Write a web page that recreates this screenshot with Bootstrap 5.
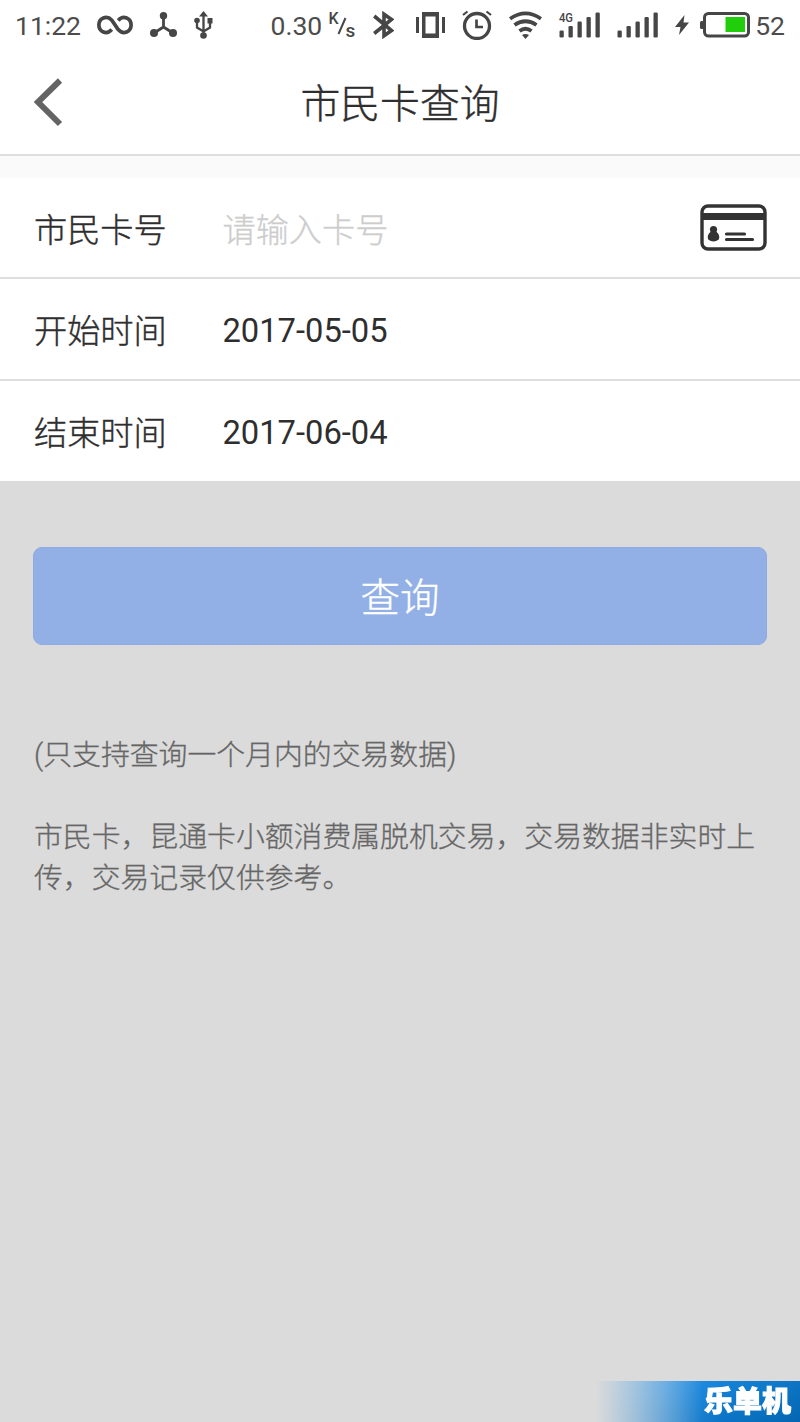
<!DOCTYPE html>
<html lang="zh-CN">
<head>
<meta charset="utf-8">
<meta name="viewport" content="width=device-width, initial-scale=1">
<title>市民卡查询</title>
<link href="https://cdn.jsdelivr.net/npm/bootstrap@5.3.0/dist/css/bootstrap.min.css" rel="stylesheet">
<style>
  body { font-family: Roboto, "Noto Sans CJK SC", sans-serif; background: #dbdbdb; color: #2e2e2e; font-weight: 300; }
  .screen { min-height: 1422px; }
  .status-bar { height: 50px; padding: 0 15px; font-size: 26.5px; line-height: 1; color: #4c4c4c; font-weight: 400; }
  .status-bar span { padding-top: 2px; }
  .status-bar svg { display: block; flex: none; }
  .gap-a { margin-left: 16px; } .gap-b { margin-left: 17px; } .gap-c { margin-left: 22px; }
  .rate { width: 28px; height: 30px; margin-left: 6px; overflow: visible; }
  .battery { margin: 0 5px 0 11px; }
  .title-bar { height: 106px; border-bottom: 2px solid #dedede; padding: 0 33px; }
  .title-bar h1 { font-size: 39.8px; font-weight: 300; line-height: 1; padding-top: 6px; margin-right: 30px; -webkit-text-stroke: .4px currentColor; }
  .back-icon { display: block; }
  .band { height: 22px; background: #fafafa; }
  .field { padding: 0 33px; font-size: 33.2px; line-height: 1; border-bottom: 2px solid #dedede; height: 101.4px; }
  .field:last-child { border-bottom: 0; height: 100.2px; }
  .field-label { width: 189.5px; padding: 5px 0 0 1px; -webkit-text-stroke: .4px currentColor; }
  .field-value { font-size: 32.7px; padding-top: 5px; font-weight: 400; }
  .field input { font-size: 33.2px; height: 60px; font-weight: 300; position: relative; top: 3px; -webkit-text-stroke: .3px #cdcdcd; }
  .field input::placeholder { color: #cdcdcd; opacity: 1; }
  .actions { padding: 66px 33px 0; }
  .btn-query, .btn-query:hover { height: 98px; border: 1px solid #8eaae0; border-radius: 9px; background: #92afe6; color: #fff; font-size: 39.5px; font-weight: 300; line-height: 1; padding-top: 12px; -webkit-text-stroke: .35px currentColor; }
  .notes { padding: 90px 33px 0 34px; font-size: 28.85px; line-height: 41px; color: #666; -webkit-text-stroke: .3px currentColor; }
  .notes p { margin-bottom: 41px; }
  .stamp { width: 204px; height: 41px; padding: 2px 9px 0 0; color: #fff; font-size: 29px; font-weight: 900; line-height: 1;
    background: linear-gradient(180deg, #2299f044, #0060a844), linear-gradient(90deg, #68aee8, #3897e3 35%, #107bd0 62%, #0568b4);
    -webkit-mask-image: linear-gradient(90deg, transparent, #000 52%); mask-image: linear-gradient(90deg, transparent, #000 52%); }
  .stamp span { -webkit-text-stroke: 1px #fff; }
</style>
</head>
<body>
<div class="screen d-flex flex-column">
  <div class="bg-white">
    <div class="status-bar d-flex align-items-center justify-content-between">
      <div class="d-flex align-items-center">
        <span>11:22</span>
        <svg class="gap-a" width="36" height="20" viewBox="0 0 36 20" fill="none" stroke="#464646" stroke-width="3.7"><path d="M14.800 14.500C9.500 20.500 1.900 16.500 1.900 10S9.500-.5 14.800 5.200L21.200 14.500C26.500 20.500 34.100 16.500 34.100 10S26.500-.5 21.200 5.500"/></svg>
        <svg class="gap-b" width="27" height="26" viewBox="0 0 27 26" fill="#464646"><path d="M13.500 4V16M13.500 15L4 21M13.500 15l9.500 6" stroke="#464646" stroke-width="2.800"/><circle cx="13.500" cy="3.800" r="3.700"/><circle cx="4" cy="21" r="4"/><circle cx="23" cy="21" r="4"/></svg>
        <svg class="gap-b" width="19" height="28" viewBox="0 0 19 28" fill="#464646"><path d="M9.500 4v20M3 10v6.500l6.500 4 6.500-4V10" fill="none" stroke="#464646" stroke-width="2.300"/><path d="M9.500 0l4.500 5.500H5zM13.500 7h5v5.500h-5z"/><circle cx="3" cy="9.500" r="2.800"/><circle cx="9.500" cy="24.500" r="3.300"/></svg>
      </div>
      <div class="d-flex align-items-center">
        <span>0.30</span>
        <svg class="rate" viewBox="0 0 28 30" fill="#464646" font-family="Roboto, sans-serif" font-weight="500"><text x="0.500" y="14" font-size="16">K</text><text x="17.500" y="27" font-size="19">s</text><path d="M10.500 24L17.500 8" stroke="#464646" stroke-width="2"/></svg>
        <svg class="gap-b" width="21" height="28" viewBox="0 0 21 28" fill="none" stroke="#464646" stroke-width="3.600"><path d="M1.200 5L18.500 19.500l-7.500 5.300V3.200L18.500 8.500 1.200 22.500"/></svg>
        <svg class="gap-c" width="29" height="28" viewBox="0 0 29 28" fill="#464646"><path d="M0 6h3v16H0zM26 6h3v16h-3zM6 1h17v26H6zM9.500 5.500v17h10v-17z" fill-rule="evenodd"/></svg>
        <svg class="gap-b" width="30" height="30" viewBox="0 0 30 30" fill="none" stroke="#464646" stroke-width="3.300"><circle cx="15" cy="16" r="12.500"/><path d="M14.500 9.500V17H21" stroke-width="2.700"/><path d="M1 5L5.500 1.500M29 5l-4.500-3.500" stroke-width="2.200"/></svg>
        <svg class="gap-b" width="33" height="28" viewBox="0 0 33 28" fill="none" stroke="#464646" stroke-width="3.800"><path d="M1 7.800Q16.500-3 32 7.800M5.500 14Q16.500 6.500 27.500 14M10.500 20Q16.500 15.500 22.500 20"/><path d="M13 24Q16.500 22 20 24L16.500 28z" fill="#464646" stroke="none"/></svg>
        <svg class="gap-b" width="41" height="28" viewBox="0 0 41 28" fill="#464646"><text x="0" y="10.800" font-family="Roboto, sans-serif" font-size="12.500" font-weight="500" textLength="14" lengthAdjust="spacingAndGlyphs">4G</text><rect x="0.500" y="19.500" width="4.300" height="7" rx="1.300"/><rect x="9.500" y="15" width="4.300" height="11.500" rx="1.300"/><rect x="18.500" y="10.500" width="4.300" height="16" rx="1.300"/><rect x="27.500" y="6" width="4.300" height="20.500" rx="1.300"/><rect x="36.500" y="1.500" width="4.300" height="25" rx="1.300"/></svg>
        <svg class="gap-b" width="41" height="28" viewBox="0 0 41 28" fill="#464646"><rect x="0.500" y="19.500" width="4.300" height="7" rx="1.300"/><rect x="9.500" y="15" width="4.300" height="11.500" rx="1.300"/><rect x="18.500" y="10.500" width="4.300" height="16" rx="1.300"/><rect x="27.500" y="6" width="4.300" height="20.500" rx="1.300"/><rect x="36.500" y="1.500" width="4.300" height="25" rx="1.300"/></svg>
        <svg class="gap-b" width="14" height="20" viewBox="0 0 14 20" fill="#464646"><path d="M9.500 0L0 12h5.500L4 20 14 7.500H8.500z"/></svg>
        <svg class="battery" width="50" height="26" viewBox="0 0 50 26"><rect x="4.500" y="1.500" width="44" height="22.500" rx="4" fill="none" stroke="#464646" stroke-width="3"/><rect y="9" width="4" height="8" rx="1.500" fill="#464646"/><rect x="25.500" y="5" width="19.500" height="15" fill="#21ce0c"/></svg>
        <span>52</span>
      </div>
    </div>
    <header class="title-bar d-flex align-items-center">
      <svg class="back-icon" width="30" height="50" viewBox="0 0 30 50" fill="none" stroke="#646464" stroke-width="6"><path d="M27 3.500L5 25l22 22"/></svg>
      <h1 class="mb-0 flex-grow-1 text-center">市民卡查询</h1>
    </header>
    <div class="band"></div>
    <form id="card-form">
      <div class="field d-flex align-items-center">
        <label class="field-label" for="card-no">市民卡号</label>
        <input id="card-no" class="form-control border-0 p-0 flex-grow-1 w-auto" placeholder="请输入卡号">
        <svg width="67" height="47" viewBox="0 0 67 47" fill="#333"><rect x="2" y="2" width="63" height="43" rx="6" fill="none" stroke="#333" stroke-width="3.400"/><path d="M2 9h63v7H2z"/><circle cx="13.500" cy="25.500" r="3.600"/><path d="M11 27.500h5c3 2 4 5 2.800 8q-5.300 4-10.600 0c-1.200-3-.2-6 2.800-8z"/><path d="M26.500 30h18M26.500 35.500h26" stroke="#333" stroke-width="3.200" stroke-linecap="round"/></svg>
      </div>
      <div class="field d-flex align-items-center">
        <span class="field-label">开始时间</span><span class="field-value">2017-05-05</span>
      </div>
      <div class="field d-flex align-items-center">
        <span class="field-label">结束时间</span><span class="field-value">2017-06-04</span>
      </div>
    </form>
  </div>
  <div class="actions"><button type="submit" form="card-form" class="btn btn-query w-100">查询</button></div>
  <div class="notes">
    <p>(只支持查询一个月内的交易数据)</p>
    <p>市民卡，昆通卡小额消费属脱机交易，交易数据非实时上传，交易记录仅供参考。</p>
  </div>
  <div class="stamp mt-auto ms-auto d-flex align-items-center justify-content-end"><span>乐单机</span></div>
</div>
<script src="https://cdn.jsdelivr.net/npm/bootstrap@5.3.0/dist/js/bootstrap.bundle.min.js"></script>
</body>
</html>
